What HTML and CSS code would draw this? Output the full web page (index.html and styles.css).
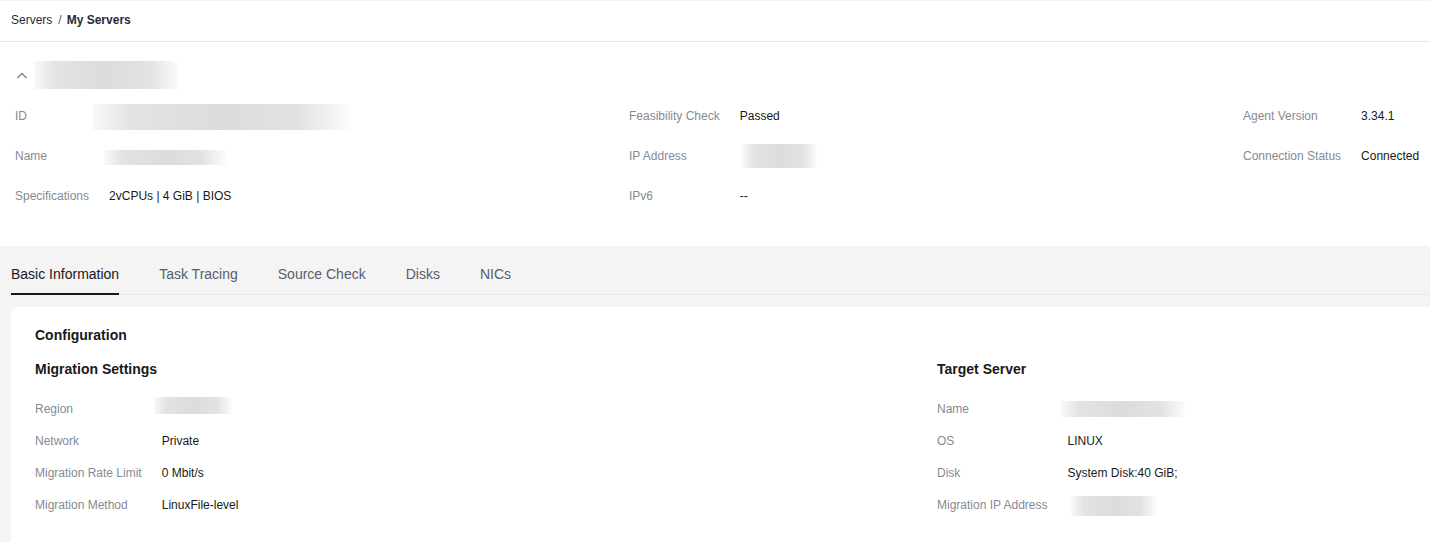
FILE: index.html
```html
<!DOCTYPE html>
<html>
	<head>
		<meta name="viewport" content="width=device-width, initial-scale=1" />
		<title>My Servers</title>
		<link rel="stylesheet" href="styles.css">
	</head>
	<body>
		<div class="crumbs">
			<span class="crumb">Servers</span>
			<span class="sep">/</span>
			<span class="crumb current">My Servers</span>
		</div>

		<div class="summary">
			<div class="title">
				<svg class="chev" width="12" height="12" viewBox="0 0 12 12">
					<path d="M1.5 8 L6 3.5 L10.5 8" fill="none" stroke="#7a7f8a" stroke-width="1.3" />
				</svg>
				<span class="blur blur-title"></span>
			</div>
			<div class="cols">
				<div class="kv">
					<span class="k">ID</span><span class="v"><span class="blur blur-id"></span></span>
					<span class="k">Name</span><span class="v"><span class="blur blur-name"></span></span>
					<span class="k">Specifications</span><span class="v">2vCPUs | 4 GiB | BIOS</span>
				</div>
				<div class="kv">
					<span class="k">Feasibility Check</span><span class="v">Passed</span>
					<span class="k">IP Address</span><span class="v"><span class="blur blur-ip"></span></span>
					<span class="k">IPv6</span><span class="v">--</span>
				</div>
				<div class="kv">
					<span class="k">Agent Version</span><span class="v">3.34.1</span>
					<span class="k">Connection Status</span><span class="v">Connected</span>
				</div>
			</div>
		</div>

		<div class="content">
			<div class="tabs">
				<span class="tab active">Basic Information</span>
				<span class="tab">Task Tracing</span>
				<span class="tab">Source Check</span>
				<span class="tab">Disks</span>
				<span class="tab">NICs</span>
			</div>

			<div class="card">
				<h3>Configuration</h3>
				<div class="sections">
					<div class="section">
						<h4>Migration Settings</h4>
						<div class="kv small">
							<span class="k">Region</span><span class="v"><span class="blur blur-region"></span></span>
							<span class="k">Network</span><span class="v">Private</span>
							<span class="k">Migration Rate Limit</span><span class="v">0 Mbit/s</span>
							<span class="k">Migration Method</span><span class="v">LinuxFile-level</span>
						</div>
					</div>
					<div class="section">
						<h4>Target Server</h4>
						<div class="kv small">
							<span class="k">Name</span><span class="v"><span class="blur blur-target"></span></span>
							<span class="k">OS</span><span class="v">LINUX</span>
							<span class="k">Disk</span><span class="v">System Disk:40 GiB;</span>
							<span class="k">Migration IP Address</span><span class="v"><span class="blur blur-mip"></span></span>
						</div>
					</div>
				</div>
			</div>
		</div>
	</body>
</html>
```

FILE: styles.css
```css
html {
	font-family: "Liberation Sans", Arial, sans-serif;
}
body {
	margin: 0;
	background: #ffffff;
	color: #191919;
	font-size: 12px;
	overflow: hidden;
}

.crumbs {
	display: flex;
	align-items: center;
	padding: 0 11px 2px 11px;
	border-top: 1px solid #f5f5f5;
	border-bottom: 1px solid #e8e8e8;
	box-sizing: border-box;
	height: 42px;
	color: #252b3a;
}
.sep {
	margin: 0 5px 0 6px;
	color: #575d6c;
}
.current {
	font-weight: bold;
}

.summary {
	padding: 18px 15px 30px 15px;
}
.title {
	display: flex;
	align-items: center;
	height: 30px;
	margin-bottom: 6px;
}
.chev {
	margin: 2px 6px 0 1px;
}
.cols {
	display: grid;
	grid-template-columns: 614px 614px 1fr;
}
.kv {
	display: grid;
	grid-template-columns: max-content 1fr;
	column-gap: 20px;
	grid-auto-rows: 40px;
	align-items: center;
	align-content: start;
}
.kv.small {
	grid-auto-rows: 32px;
}
.k {
	color: #858a94;
	white-space: nowrap;
}
.v {
	color: #191919;
	white-space: nowrap;
}

.blur {
	display: inline-block;
	vertical-align: middle;
	background: linear-gradient(90deg, rgba(235,235,235,0.3), #e3e3e3 15%, #dcdcdc 50%, #e2e2e2 80%, rgba(240,240,240,0.2));
}
.blur-title {
	width: 145px;
	height: 28px;
	margin-left: 0;
}
.blur-id {
	width: 257px;
	height: 26px;
	margin-left: -16px;
	margin-top: 1px;
}
.blur-name {
	width: 122px;
	height: 15px;
	margin-left: -5px;
	margin-top: 3px;
}
.blur-ip {
	width: 75px;
	height: 24px;
	margin-left: 2px;
}
.blur-region {
	width: 78px;
	height: 17px;
	margin-left: -8px;
	margin-top: -8px;
}
.blur-target {
	width: 124px;
	height: 16px;
	margin-left: -7px;
	margin-top: -1px;
}
.blur-mip {
	width: 86px;
	height: 20px;
	margin-left: 3px;
	margin-top: 2px;
}

.content {
	background: #f4f4f4;
	padding: 10px 0 0 11px;
	min-height: 300px;
}
.tabs {
	display: flex;
	gap: 40px;
	border-bottom: 1px solid #e8e8e8;
}
.tab {
	font-size: 14px;
	line-height: 20px;
	padding: 8px 0 9px 0;
	color: #575d6c;
	border-bottom: 2px solid transparent;
	margin-bottom: -1px;
}
.tab.active {
	color: #191919;
	border-bottom-color: #191919;
}

.card {
	background: #ffffff;
	margin-top: 12px;
	border-radius: 8px 0 0 0;
	padding: 18px 24px 30px 24px;
	min-height: 240px;
}
h3 {
	font-size: 14px;
	line-height: 20px;
	margin: 0 0 14px 0;
}
h4 {
	font-size: 14px;
	line-height: 20px;
	margin: 0 0 14px 0;
}
.sections {
	display: grid;
	grid-template-columns: 902px 1fr;
}
```
